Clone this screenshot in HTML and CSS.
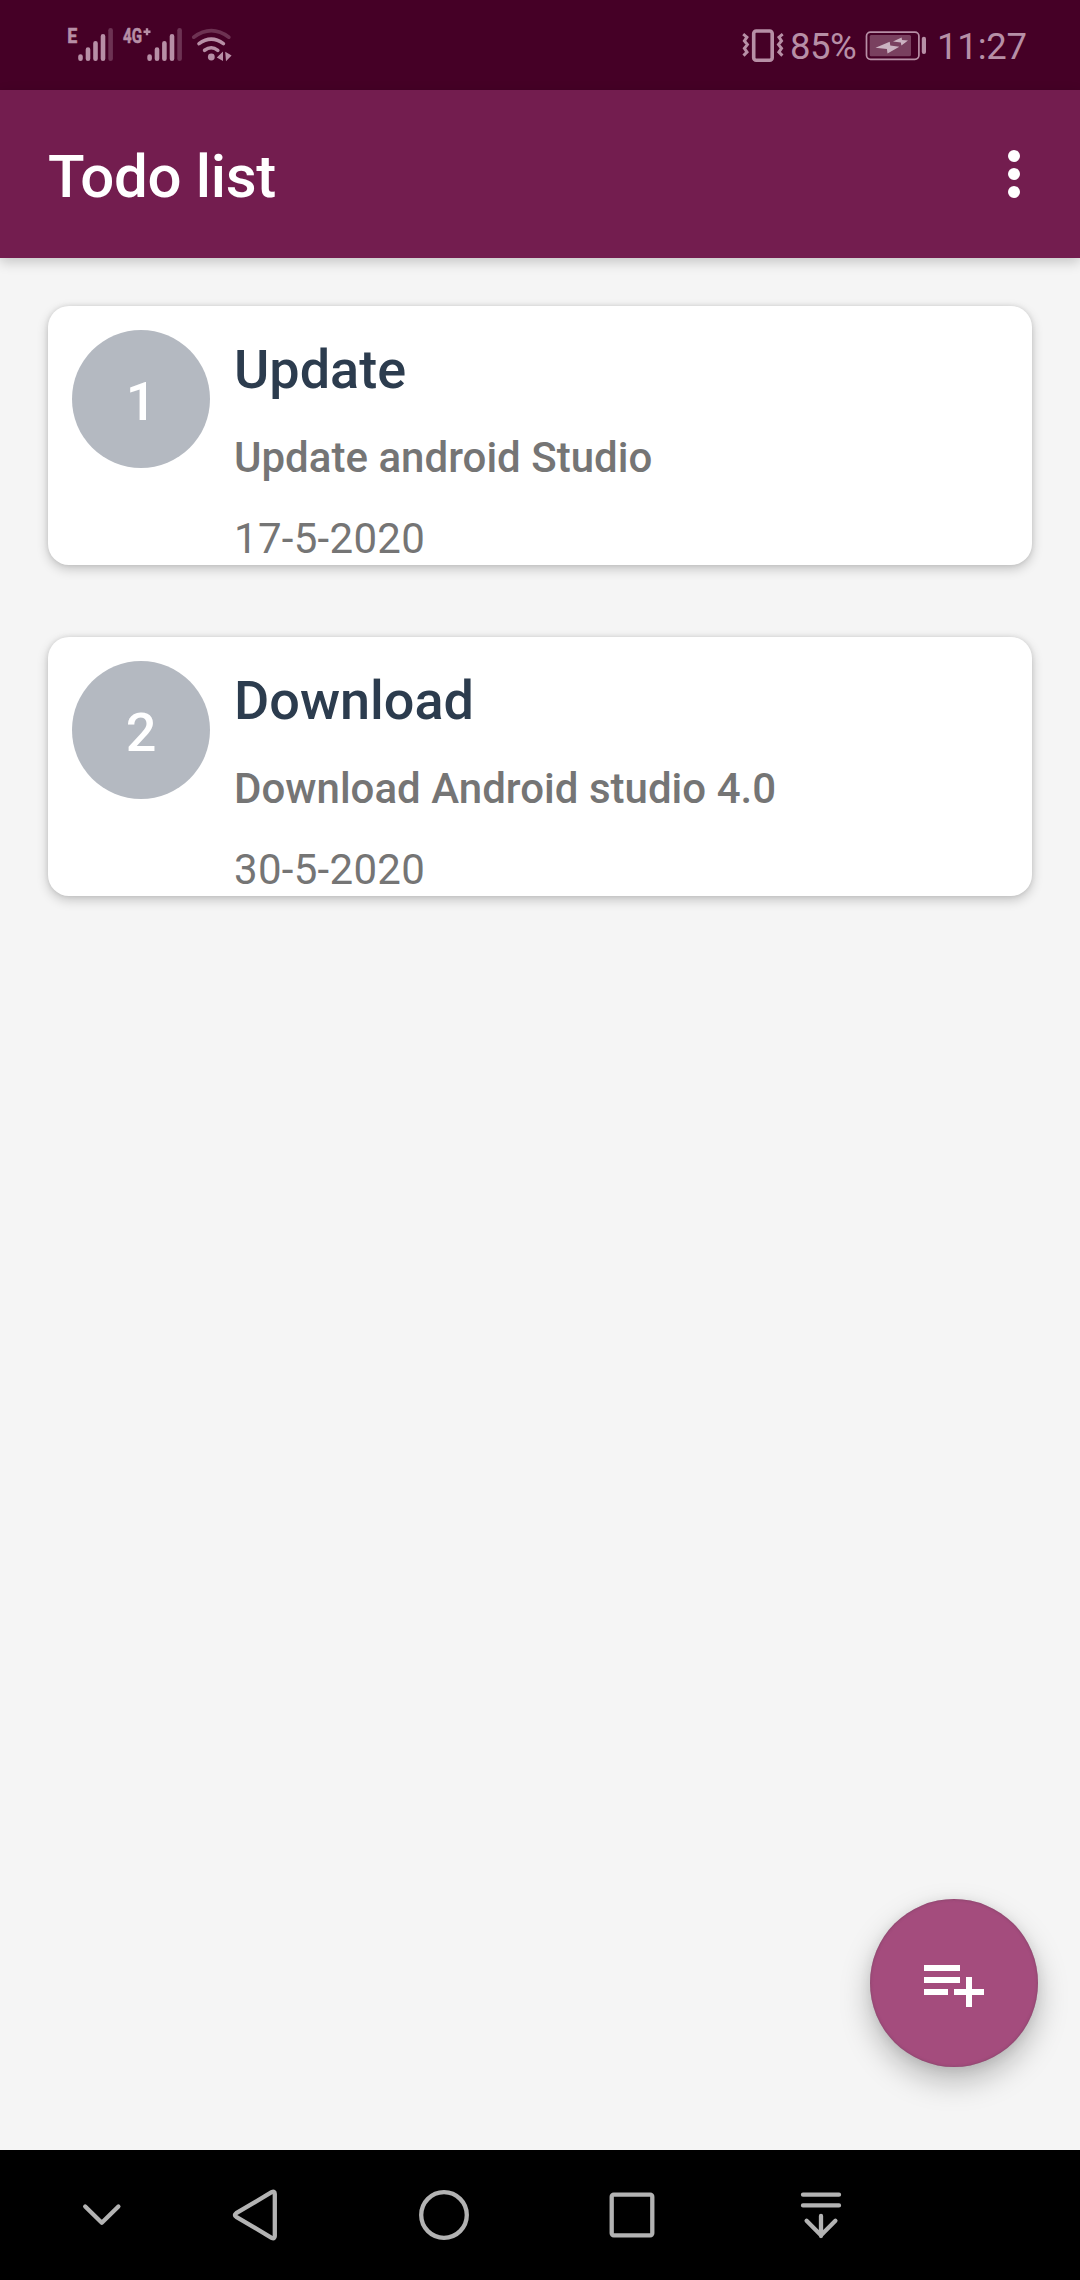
FILE: index.html
```html
<!DOCTYPE html>
<html lang="en">
<head>
<meta charset="utf-8">
<title>Todo list</title>
<link rel="stylesheet" href="styles.css">
</head>
<body>
<div class="screen">
  <div class="status-bar">
    <div class="status-group">
      <svg class="signal" width="50" height="90" viewBox="66 0 50 90">
        <text class="network" x="67.2" y="43" textLength="10" lengthAdjust="spacingAndGlyphs">E</text>
        <path class="bars" d="M80.5 56.6v2.1M88 49.6v9.1M95.5 43.2v15.5M103 36.2v22.5"/>
        <path class="bars faint" d="M110.6 30.2v28.5"/>
      </svg>
      <svg class="signal" width="62" height="90" viewBox="122 0 62 90">
        <text class="network" x="123" y="43" textLength="19" lengthAdjust="spacingAndGlyphs">4G</text>
        <path class="plus" d="M147 28.3v7M143.5 31.8h7"/>
        <path class="bars" d="M149.6 56.6v2.1M157 49.6v9.1M164.4 43.2v15.5M172 36.2v22.5"/>
        <path class="bars faint" d="M179.6 30.2v28.5"/>
      </svg>
      <svg class="wifi" width="42" height="90" viewBox="191 0 42 90">
        <path class="arc faint" d="M193.7 37.2Q211.3 24.2 228.9 37.2"/>
        <path class="arc" d="M199 43.6Q211.3 34.6 223.4 43.6M204.6 50.3Q211.3 45.2 217.8 50.3"/>
        <circle cx="211.3" cy="57" r="3.4"/>
        <path d="M216.8 57.5l6.2-6v9.6zM225.2 51.7l6.4 3.8-5.6 5.8z"/>
      </svg>
    </div>
    <div class="status-group">
      <svg class="vibrate" width="44" height="90" viewBox="741 0 44 90">
        <rect class="phone" x="753.7" y="31" width="18.5" height="29.3" rx="2.5"/>
        <path class="buzz" d="M743.2 34.2l3.7 3-2.5 3.7 3 3.7-3 3.8 2.6 3.6-3.5 3.6M782.7 34.2l-3.7 3 2.5 3.7-3 3.7 3 3.8-2.6 3.6 3.5 3.6"/>
      </svg>
      <span class="percent">85%</span>
      <svg class="battery" width="62" height="90" viewBox="865 0 62 90">
        <rect class="shell" x="866.5" y="32.1" width="52.4" height="27.2" rx="4"/>
        <rect class="charge" x="869.7" y="35" width="41.3" height="21.3" rx="1.5"/>
        <rect x="921.8" y="36.8" width="4.2" height="17.3" rx="2"/>
        <path class="bolt" d="M875.5 47.8L889.7 41.8l.6 3.7 9 1.3-11.8 6.7-.6-4.5zM893 41.5l8.6-4 .4 2.5 6 .5-6.6 5-.6-3z"/>
      </svg>
      <span class="clock">11:27</span>
    </div>
  </div>

  <header class="app-bar">
    <h1>Todo list</h1>
    <svg width="12" height="48" viewBox="0 0 12 48"><circle cx="6" cy="6" r="6"/><circle cx="6" cy="24" r="6"/><circle cx="6" cy="42" r="6"/></svg>
  </header>

  <main class="list">
    <article class="card">
      <div class="badge">1</div>
      <div class="details">
        <h2>Update</h2>
        <p class="note">Update android Studio</p>
        <p class="date">17-5-2020</p>
      </div>
    </article>
    <article class="card">
      <div class="badge">2</div>
      <div class="details">
        <h2>Download</h2>
        <p class="note">Download Android studio 4.0</p>
        <p class="date">30-5-2020</p>
      </div>
    </article>
    <button class="add" aria-label="Add task">
      <svg width="72" height="72" viewBox="0 0 24 24"><path d="M14 10H2v2h12zM14 6H2v2h12zM18 14v-4h-2v4h-4v2h4v4h2v-4h4v-2zM2 16h8v-2H2z"/></svg>
    </button>
  </main>

  <nav class="nav-bar">
    <svg width="60" height="60" viewBox="0 0 60 60"><path d="M13.2 21.5L29.8 37.7 46.4 21.5"/></svg>
    <svg width="60" height="60" viewBox="0 0 60 60"><path d="M4.2 28.2L39.6 7.2Q42.8 5.6 42.8 9V51Q42.8 54.4 39.6 52.8L4.2 31.8Q1.6 30 4.2 28.2Z"/></svg>
    <svg width="60" height="60" viewBox="0 0 60 60"><circle cx="30" cy="30" r="22.8"/></svg>
    <svg width="60" height="60" viewBox="0 0 60 60"><rect x="9.7" y="9.7" width="40.6" height="40.6" rx="2"/></svg>
    <svg width="60" height="60" viewBox="0 0 60 60"><path d="M12 9.7h36M12 20.4h36M30 31v20M15.6 35.8L30 50.2l14.4-14.4"/></svg>
  </nav>
</div>
</body>
</html>
```
FILE: styles.css
```css
* { box-sizing: border-box; margin: 0; }

body { font-family: Roboto, sans-serif; background: #f5f5f5; }

.screen { width: 1080px; height: 2280px; display: flex; flex-direction: column; overflow: hidden; }
svg { display: block; flex: none; }

/* Status bar */
.status-bar {
  height: 90px; flex: none; display: flex; justify-content: space-between;
  padding: 0 54px 0 66px; background: #450026; color: #b78fa6; fill: #b78fa6;
}
.status-group { display: flex; }
.signal { margin-right: 6px; }
.wifi { margin-left: 1px; }
.network { font-size: 21px; font-weight: 700; stroke: #b78fa6; stroke-width: .6; }
.bars { stroke: #b78fa6; stroke-width: 4.6; stroke-linecap: round; }
.plus { stroke: #b78fa6; stroke-width: 2.4; }
.arc { fill: none; stroke: #b78fa6; stroke-width: 3.6; stroke-linecap: round; }
.faint { opacity: .35; }
.phone { fill: none; stroke: #b78fa6; stroke-width: 3.6; }
.buzz { fill: none; stroke: #b78fa6; stroke-width: 3; }
.shell { fill: none; stroke: #b78fa6; stroke-width: 1.7; }
.charge { opacity: .45; }
.bolt { fill: #cbb2c1; }
.percent, .clock { font-size: 36.5px; line-height: 94px; white-space: nowrap; }
.percent { width: 74px; padding-left: 5px; letter-spacing: -.5px; }
.battery { margin-left: 6px; }
.clock { width: 99px; padding-left: 10px; letter-spacing: -.2px; }

/* App bar */
.app-bar {
  height: 168px; flex: none; display: flex; align-items: center; justify-content: space-between;
  padding: 0 60px 0 48px; background: #731d4f; color: #fff; fill: #fff;
  position: relative; z-index: 1; box-shadow: 0 4px 12px rgba(0, 0, 0, .2);
}
.app-bar h1 { font-size: 60px; font-weight: 500; line-height: 72px; letter-spacing: -.3px; padding-top: 5px; }

/* Tasks */
.list {
  flex: 1; position: relative; display: flex; flex-direction: column; gap: 72px;
  padding: 48px; background: #f5f5f5;
}
.card {
  height: 259px; display: flex; gap: 24px; padding: 24px; background: #fff; border-radius: 21px;
  box-shadow: 0 4px 12px rgba(0, 0, 0, .2), 0 0 5px rgba(0, 0, 0, .1);
}
.badge {
  width: 138px; height: 138px; flex: none; border-radius: 50%; background: #b4b9c1; color: #fff;
  font-size: 54px; font-weight: 500; line-height: 144px; text-align: center;
}
.details { color: #757575; font-size: 42px; white-space: nowrap; padding-top: 1px; }
.details h2 { color: #2c3c4e; font-size: 54px; font-weight: 500; line-height: 78px; }
.note { font-weight: 500; line-height: 50px; margin-top: 24px; letter-spacing: .02px; }
.date { line-height: 50px; margin-top: 31px; letter-spacing: .3px; }

.add {
  position: absolute; right: 42px; bottom: 83px; width: 168px; height: 168px;
  display: grid; place-items: center; padding: 0; border: 0; border-radius: 50%;
  background: #a44c7d; fill: #fff;
  box-shadow: 0 14px 30px rgba(0, 0, 0, .25), 0 2px 12px rgba(0, 0, 0, .08), inset 0 0 3px rgba(100, 60, 85, .6);
}

/* Navigation keys */
.nav-bar {
  height: 130px; flex: none; display: flex; align-items: center; padding-left: 72px; background: #000;
  fill: none; stroke: #b3b3b3; stroke-width: 4.3; stroke-linecap: round; stroke-linejoin: round;
}
.nav-bar svg + svg { margin-left: 128px; }
.nav-bar svg:nth-child(2) { margin-left: 100px; }
.nav-bar svg:nth-child(3) { margin-left: 122px; }
.nav-bar svg:nth-child(5) { margin-left: 129px; }
```
